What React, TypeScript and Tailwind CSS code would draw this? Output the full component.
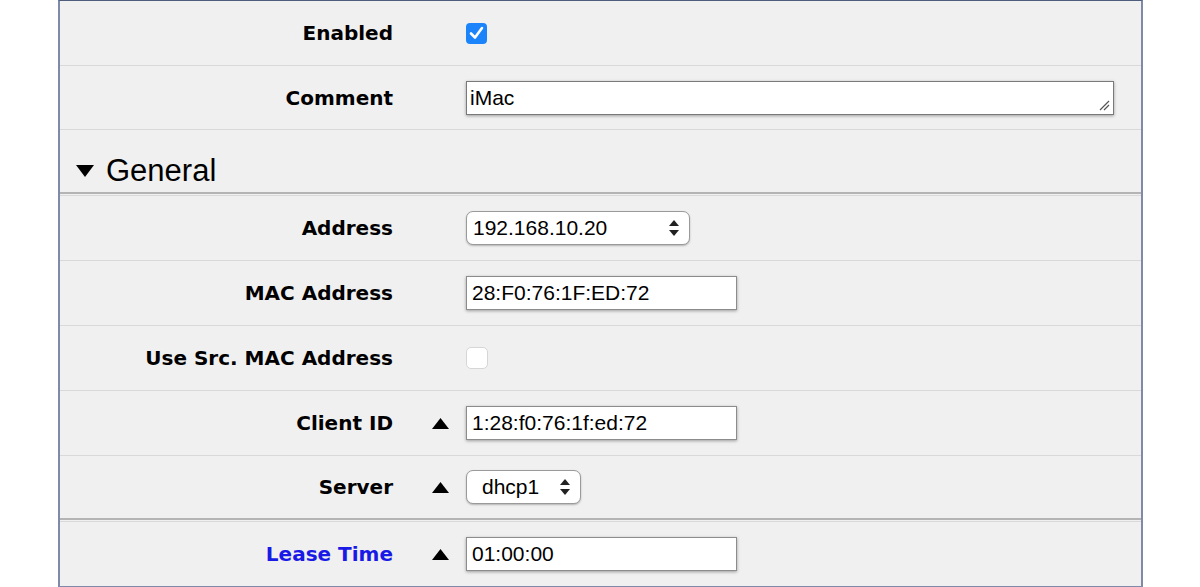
import React from 'react';

const LABEL = 'font-["DejaVu_Sans",Verdana,sans-serif] font-bold text-[20px]';
const FIELD = 'font-["Liberation_Sans",Arial,sans-serif] text-[21px] text-black';

function UpArrow() {
  return (
    <svg width="17" height="11" viewBox="0 0 17 11">
      <polygon points="8.5,0 17,11 0,11" fill="#000" />
    </svg>
  );
}

function Row({
  label,
  blue,
  arrow,
  h = 'h-[64px]',
  children,
}: {
  label: string;
  blue?: boolean;
  arrow?: boolean;
  h?: string;
  children?: React.ReactNode;
}) {
  return (
    <div className={`flex items-center ${h}`}>
      <div className={`w-[333px] text-right ${LABEL} ${blue ? 'text-[#1a1ae6]' : 'text-black'}`}>{label}</div>
      <div className="w-[73px] flex justify-end pr-[17px]">{arrow && <UpArrow />}</div>
      <div className="flex items-center">{children}</div>
    </div>
  );
}

function Sep() {
  return <div className="h-px bg-[#d9d9d9]" />;
}

function DoubleSep() {
  return (
    <div className="flex flex-col">
      <div className="h-[2px] bg-[#b4b4b4]" />
      <div className="h-px bg-[#f0f0f0]" />
      <div className="h-px bg-[#d9d9d9]" />
    </div>
  );
}

function TextBox({ value, w = 'w-[271px]' }: { value: string; w?: string }) {
  return (
    <div
      className={`${w} h-[34px] bg-white border border-[#8c8c8c] shadow-[0_1px_3px_rgba(0,0,0,0.35)] flex items-center pl-[5px] ${FIELD}`}
    >
      {value}
    </div>
  );
}

function Select({ value, w, pl }: { value: string; w: string; pl: string }) {
  return (
    <div
      className={`${w} h-[34px] bg-white rounded-[7px] border border-[#9a9a9a] shadow-[0_1px_2px_rgba(0,0,0,0.25)] flex items-center justify-between ${pl} pr-[10px] ${FIELD}`}
    >
      <span>{value}</span>
      <svg width="10" height="16" viewBox="0 0 10 16">
        <polygon points="5,0 10,6 0,6" fill="#222" />
        <polygon points="0,10 10,10 5,16" fill="#222" />
      </svg>
    </div>
  );
}

export default function App() {
  return (
    <div className="w-[1200px] h-[587px] bg-white">
      <div className="ml-[58px] w-[1085px] h-[587px] bg-[#f0f0f0] border-l-2 border-r-2 border-t border-b border-[#7e8aa8] border-t-[#4f5d7d] flex flex-col">
        <Row label="Enabled">
          <div className="w-[21px] h-[21px] rounded-[4px] bg-[#1c84fa] flex items-center justify-center">
            <svg width="15" height="14" viewBox="0 0 15 14">
              <path d="M2 7.5 L6 11.5 L13 2" stroke="#fff" strokeWidth="2.6" fill="none" strokeLinecap="round" strokeLinejoin="round" />
            </svg>
          </div>
        </Row>
        <Sep />
        <Row label="Comment" h="h-[63px]">
          <div className="relative w-[648px] h-[34px] bg-white border border-[#7a7a7a] shadow-[0_1px_3px_rgba(0,0,0,0.35)] flex items-center pl-[3px]">
            <span className={FIELD}>iMac</span>
            <svg className="absolute right-[3px] bottom-[3px]" width="11" height="11" viewBox="0 0 11 11">
              <path d="M1 10 L10 1 M5 10 L10 5" stroke="#555" strokeWidth="1.2" />
            </svg>
          </div>
        </Row>
        <Sep />
        <div className="h-[62px] flex items-center pl-[16px] pt-[20px] gap-[12px]">
          <svg width="18" height="12" viewBox="0 0 18 12">
            <polygon points="0,0 18,0 9,12" fill="#000" />
          </svg>
          <span className='font-["Liberation_Sans",Arial,sans-serif] text-[31px] text-black'>General</span>
        </div>
        <DoubleSep />
        <Row label="Address">
          <Select value="192.168.10.20" w="w-[224px]" pl="pl-[6px]" />
        </Row>
        <Sep />
        <Row label="MAC Address">
          <TextBox value="28:F0:76:1F:ED:72" />
        </Row>
        <Sep />
        <Row label="Use Src. MAC Address">
          <div className="w-[22px] h-[22px] rounded-[5px] bg-white border border-[#d6d6d6]" />
        </Row>
        <Sep />
        <Row label="Client ID" arrow>
          <TextBox value="1:28:f0:76:1f:ed:72" />
        </Row>
        <Sep />
        <Row label="Server" arrow h="h-[62px]">
          <Select value="dhcp1" w="w-[115px]" pl="pl-[15px]" />
        </Row>
        <DoubleSep />
        <Row label="Lease Time" arrow blue>
          <TextBox value="01:00:00" />
        </Row>
      </div>
    </div>
  );
}
